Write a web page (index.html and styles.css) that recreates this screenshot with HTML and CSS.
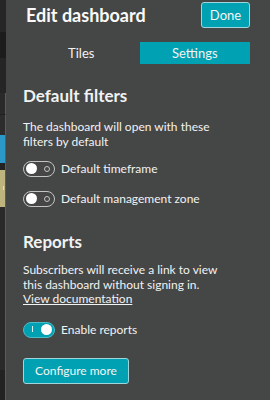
FILE: index.html
```html
<!DOCTYPE html>
<html lang="en">
  <head>
    <meta charset="UTF-8" />
    <meta name="viewport" content="width=device-width, initial-scale=1.0" />
    <title>Edit dashboard</title>
    <link rel="stylesheet" href="styles.css">
  </head>

  <body>
    <div class="screen">
      <!-- the dashboard peeking out behind the panel -->
      <div class="backdrop">
        <div class="bd bd-top"></div>
        <div class="bd bd-bar"></div>
        <div class="bd bd-row"></div>
        <div class="bd bd-row2"></div>
        <div class="bd bd-row3"></div>
        <div class="bd bd-blue"></div>
        <div class="bd bd-gap"></div>
        <div class="bd bd-tile"></div>
        <div class="bd bd-body"></div>
        <div class="bd bd-foot"></div>
      </div>

      <aside class="panel">
        <header class="panel-head">
          <h1 class="title">Edit dashboard</h1>
          <button class="btn btn-done">Done</button>
        </header>

        <nav class="tabs">
          <button class="tab">Tiles</button>
          <button class="tab active">Settings</button>
        </nav>

        <section class="group">
          <h2 class="group-title">Default filters</h2>
          <p class="group-text">The dashboard will open with these filters by default</p>
          <label class="switch-row">
            <span class="switch"></span>
            Default timeframe
          </label>
          <label class="switch-row">
            <span class="switch"></span>
            Default management zone
          </label>
        </section>

        <section class="group">
          <h2 class="group-title">Reports</h2>
          <p class="group-text">
            Subscribers will receive a link to view this dashboard without signing in.
            <a href="#" class="doc-link">View documentation</a>
          </p>
          <label class="switch-row">
            <span class="switch on"></span>
            Enable reports
          </label>
          <button class="btn btn-more">Configure more</button>
        </section>
      </aside>
    </div>
  </body>
</html>
```

FILE: styles.css
```css
body {
  margin: 0;
  padding: 0;
  font-family: Lato, "Open Sans", sans-serif;
  color: #f2f2f2;
  background: #454646;
}

.screen {
  display: flex;
  width: 270px;
  height: 400px;
  overflow: hidden;
}

/* strip of the dashboard behind */
.backdrop {
  display: flex;
  flex-direction: column;
  width: 6px;
  flex-shrink: 0;
}

.bd {
  flex-shrink: 0;
}

.bd-top {
  height: 32px;
  background: #262626;
}

.bd-bar {
  height: 26px;
  background: #1c1c1c;
}

.bd-row {
  height: 35px;
  background: #252525;
}

.bd-row2,
.bd-row3,
.bd-blue,
.bd-gap,
.bd-tile,
.bd-body,
.bd-foot {
  border-right: 1px solid #5c5c5c;
}

.bd-row2 {
  height: 21px;
  background: #2a2a2a;
  border-bottom: 1px solid #202020;
}

.bd-row3 {
  height: 20px;
  background: #2c2c2c;
}

.bd-blue {
  height: 28px;
  background: #2b98c9;
}

.bd-gap {
  height: 7px;
  background: #232323;
}

.bd-tile {
  height: 37px;
  background: linear-gradient(90deg, #bfb47e 60%, #e6dfbf 60%, #e6dfbf 80%, #bfb47e 80%);
  background-size: 100% 4px;
  background-repeat: no-repeat;
  background-position: 0 16px;
  background-color: #bfb47e;
}

.bd-body {
  height: 163px;
  background: #2a2a2a;
}

.bd-foot {
  flex: 1;
  background: #222;
}

.panel {
  flex: 1;
  padding: 2px 20px 0 17px;
  background: #454646;
}

.panel-head {
  display: flex;
  justify-content: space-between;
  align-items: center;
  padding-left: 3px;
}

.title {
  margin: 0;
  font-size: 18px;
  font-weight: bold;
  color: #fafafa;
}

.btn {
  font-family: inherit;
  font-size: 13px;
  color: #f5f5f5;
  background: #00a1b2;
  border: 1px solid #9fd5db;
  border-radius: 3px;
  cursor: pointer;
}

.btn-done {
  width: 49px;
  height: 26px;
  padding: 0;
}

.tabs {
  display: grid;
  grid-template-columns: 1fr 1fr;
  gap: 3px;
  margin: 14px 0 0 3px;
}

.tab {
  height: 22px;
  padding: 0;
  font-family: inherit;
  font-size: 13px;
  color: #f2f2f2;
  background: none;
  border: 0;
}

.tab.active {
  background: #00a1b2;
}

.group {
  padding-top: 22px;
}

.group + .group {
  padding-top: 25px;
}

.group-title {
  margin: 0;
  font-size: 17px;
  line-height: 20px;
  font-weight: bold;
}

.group-text {
  max-width: 205px;
  margin: 13px 0 0;
  font-size: 12px;
  line-height: 15px;
}

.group + .group .group-text {
  margin-top: 11px;
  line-height: 14.5px;
}

.doc-link {
  display: block;
  width: max-content;
  color: #f2f2f2;
  text-decoration: underline;
}

.switch-row {
  display: flex;
  align-items: center;
  gap: 6px;
  margin-top: 14px;
  font-size: 12px;
  line-height: 16px;
}

.group-text + .switch-row {
  margin-top: 12px;
}

.group + .group .group-text + .switch-row {
  margin-top: 15px;
}

.switch {
  position: relative;
  box-sizing: border-box;
  width: 32px;
  height: 16px;
  border: 1.5px solid #c4c4c4;
  border-radius: 8px;
  flex-shrink: 0;
}

.switch::before {
  content: "";
  position: absolute;
  top: 1px;
  left: 2px;
  width: 11px;
  height: 11px;
  border-radius: 50%;
  background: #fff;
}

.switch::after {
  content: "";
  position: absolute;
  top: 3.5px;
  right: 4px;
  box-sizing: border-box;
  width: 6px;
  height: 6px;
  border: 1px solid #c4c4c4;
  border-radius: 50%;
}

.switch.on {
  background: #00a1b2;
  border-color: #4cbcc8;
}

.switch.on::before {
  left: auto;
  right: 2px;
}

.switch.on::after {
  top: 3px;
  right: auto;
  left: 8px;
  width: 1px;
  height: 6px;
  border: 0;
  border-radius: 0;
  background: #d8f1f4;
}

.btn-more {
  display: block;
  width: 106px;
  height: 26px;
  margin-top: 20px;
  padding: 0;
  font-size: 12px;
}
```
